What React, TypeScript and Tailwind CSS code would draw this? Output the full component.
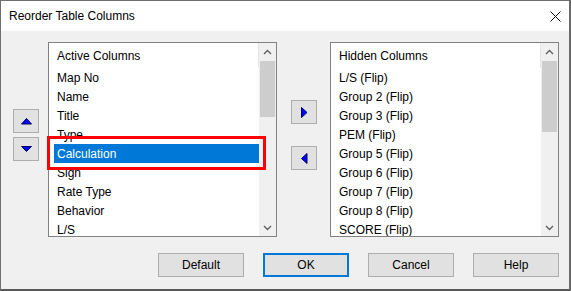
import React from "react"

const activeCols = ["Map No", "Name", "Title", "Type", "Calculation", "Sign", "Rate Type", "Behavior", "L/S"]
const hiddenCols = [
  "L/S (Flip)",
  "Group 2 (Flip)",
  "Group 3 (Flip)",
  "PEM (Flip)",
  "Group 5 (Flip)",
  "Group 6 (Flip)",
  "Group 7 (Flip)",
  "Group 8 (Flip)",
  "SCORE (Flip)",
]

const Chevron = ({ down = false }: { down?: boolean }) => (
  <svg width="9" height="6" viewBox="0 0 9 6" className={down ? "rotate-180" : ""}>
    <polyline points="1,5 4.5,1.5 8,5" fill="none" stroke="#606060" strokeWidth="1.4" />
  </svg>
)

type ListProps = {
  title: string
  items: string[]
  selected?: number
  thumb: string
}

function ListBox({ title, items, selected = -1, thumb }: ListProps) {
  return (
    <div className="w-[229px] h-[195px] border border-[#828282] bg-white flex">
      <div className="flex-1 overflow-hidden">
        <div className="h-[25px] flex items-center pl-[8px] border-r border-[#e5e5e5]">{title}</div>
        {items.map((it, i) => (
          <div
            key={it}
            className={`h-[19px] ml-[5px] pl-[3px] flex items-center whitespace-nowrap ${
              i === selected ? "bg-[#0078d7] text-white" : ""
            }`}
          >
            {it}
          </div>
        ))}
      </div>
      <div className="w-[17px] bg-[#f0f0f0] flex flex-col">
        <div className="h-[17px] flex items-center justify-center">
          <Chevron />
        </div>
        <div className="flex-1 pt-[1px]">
          <div className={`mx-[1px] bg-[#cdcdcd] ${thumb}`} />
        </div>
        <div className="h-[17px] flex items-center justify-center">
          <Chevron down />
        </div>
      </div>
    </div>
  )
}

const ArrowBtn = ({ dir }: { dir: "up" | "down" | "left" | "right" }) => {
  const pts = {
    up: "0.5,6 5.5,0.5 10.5,6",
    down: "0.5,0.5 5.5,5.5 10.5,0.5",
    right: "0.5,0.5 6,5.5 0.5,10.5",
    left: "6,0.5 0.5,5.5 6,10.5",
  }[dir]
  const vertical = dir === "up" || dir === "down"
  return (
    <div className="w-[26px] h-[24px] bg-[#e1e1e1] border border-[#adadad] flex items-center justify-center">
      <svg width={vertical ? 11 : 7} height={vertical ? 7 : 11} viewBox={vertical ? "0 0 11 7" : "0 0 7 11"}>
        <polygon points={pts} fill="#0000ff" stroke="#000060" strokeWidth="1" strokeLinejoin="miter" />
      </svg>
    </div>
  )
}

const Btn = ({ label, def = false }: { label: string; def?: boolean }) => (
  <div
    className={`w-[86px] h-[24px] bg-[#e1e1e1] flex items-center justify-center ${
      def ? "border-2 border-[#0078d7]" : "border border-[#adadad]"
    }`}
  >
    {label}
  </div>
)

export default function App() {
  return (
    <div className="relative w-[571px] h-[291px] bg-[#f0f0f0] border-t border-l border-[#6f6f6f] border-r-2 border-r-[#6a6a6a] border-b-2 border-b-[#5a5a5a] text-[12px] text-black font-['Liberation_Sans',Arial,sans-serif] overflow-hidden">
      <div className="h-[30px] bg-white flex items-center pl-[8px]">
        <span>Reorder Table Columns</span>
        <svg width="11" height="11" viewBox="0 0 11 11" className="ml-auto mr-[8px]">
          <path d="M0.5 0.5 L10.5 10.5 M10.5 0.5 L0.5 10.5" stroke="#111" strokeWidth="1" />
        </svg>
      </div>

      <div className="pt-[11px] pl-[12px] flex">
        <div className="mt-[67px] flex flex-col gap-[4px]">
          <ArrowBtn dir="up" />
          <ArrowBtn dir="down" />
        </div>
        <div className="ml-[9px]">
          <ListBox title="Active Columns" items={activeCols} selected={4} thumb="h-[56px]" />
        </div>
        <div className="ml-[14px] mt-[58px] flex flex-col gap-[22px]">
          <ArrowBtn dir="right" />
          <ArrowBtn dir="left" />
        </div>
        <div className="ml-[13px]">
          <ListBox title="Hidden Columns" items={hiddenCols} thumb="h-[71px]" />
        </div>
      </div>

      <div className="mt-[16px] pl-[157px] flex gap-[19px]">
        <Btn label="Default" />
        <Btn label="OK" def />
        <Btn label="Cancel" />
        <Btn label="Help" />
      </div>

      <div className="absolute left-[46px] top-[135px] w-[219px] h-[34px] border-[3px] border-[#ff0000]" />
    </div>
  )
}
